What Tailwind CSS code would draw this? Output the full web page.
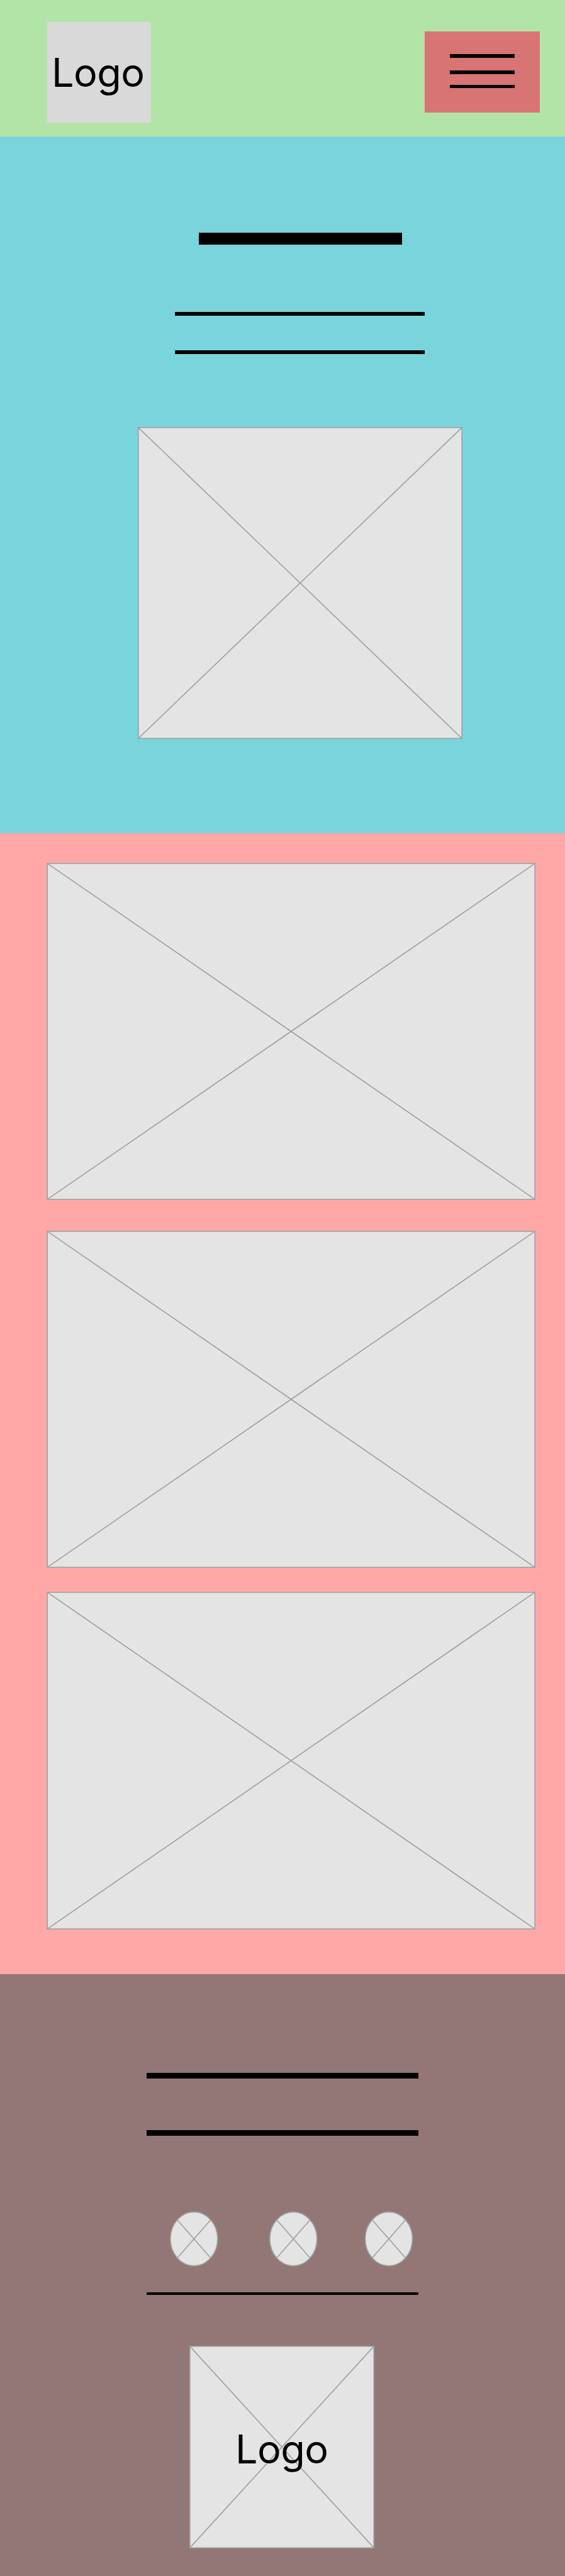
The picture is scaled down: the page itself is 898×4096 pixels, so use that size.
<!DOCTYPE html>
<html lang="en">
<head>
<meta charset="utf-8">
<title>Wireframe</title>
<script src="https://cdn.jsdelivr.net/npm/@tailwindcss/browser@4"></script>
</head>
<body class="w-[898px] bg-[#937776] font-['Inter',sans-serif] text-black">
  <header class="flex h-[217px] items-start justify-between bg-[#b2e4a7] pl-[75px] pr-10">
    <div class="mt-[35px] flex h-40 w-[165px] items-start bg-[#d9d9d9] pl-[7px] pt-[42px] text-[63px] leading-[76px] tracking-[-0.6px]">Logo</div>
    <button class="mt-[50px] flex h-[129px] w-[183px] flex-col items-start bg-[#d87474] pl-10 pt-9" aria-label="Menu">
      <span class="h-[6px] w-[103px] bg-black"></span>
      <span class="mt-5 h-[6px] w-[103px] bg-black"></span>
      <span class="mt-[17px] h-[5px] w-[103px] bg-black"></span>
    </button>
  </header>

  <section class="flex h-[1108px] flex-col items-center bg-[#79d5db] pl-14 pt-[153px]">
    <div class="ml-px h-[19px] w-[323px] bg-black"></div>
    <div class="mr-px mt-[107px] h-[6px] w-[397px] bg-black"></div>
    <div class="mr-px mt-[55px] h-[6px] w-[397px] bg-black"></div>
    <svg class="mt-[116px] block h-[496px] w-[516px]" viewBox="0 0 516 496" fill="#e4e4e4" stroke="#a1a1a1" stroke-width="1.67">
      <rect x=".83" y=".83" width="514.34" height="494.34"/>
      <path d="M.83.83 515.17 495.17M515.17.83.83 495.17"/>
    </svg>
  </section>

  <section class="h-[1814px] bg-[#ffa8a7] pl-[74px] pt-[47px]">
    <svg class="block h-[536px] w-[777px]" viewBox="0 0 777 536" fill="#e4e4e4" stroke="#a1a1a1" stroke-width="1.67">
      <rect x="1.2" y=".83" width="775" height="534.34"/>
      <path d="M1.2.83 776.2 535.17M776.2.83 1.2 535.17"/>
    </svg>
    <svg class="mt-[49px] block h-[536px] w-[777px]" viewBox="0 0 777 536" fill="#e4e4e4" stroke="#a1a1a1" stroke-width="1.67">
      <rect x="1.2" y=".83" width="775" height="534.34"/>
      <path d="M1.2.83 776.2 535.17M776.2.83 1.2 535.17"/>
    </svg>
    <svg class="mt-[38px] block h-[537px] w-[777px]" viewBox="0 0 777 537" fill="#e4e4e4" stroke="#a1a1a1" stroke-width="1.67">
      <rect x="1.2" y=".83" width="775" height="535.34"/>
      <path d="M1.2.83 776.2 536.17M776.2.83 1.2 536.17"/>
    </svg>
  </section>

  <footer class="flex h-[957px] flex-col items-center bg-[#937776] pt-[157px]">
    <div class="h-[9px] w-[432px] bg-black"></div>
    <div class="mt-[82px] h-[9px] w-[432px] bg-black"></div>
    <div class="mt-[120px] flex w-[432px] pl-[37px]">
      <svg class="block h-[88px] w-[77px]" viewBox="0 0 77 88" fill="#e4e4e4" stroke="#a1a1a1" stroke-width="1.67">
        <ellipse cx="38.3" cy="44" rx="37.5" ry="42.8"/>
        <path d="M11.8 13.7 64.8 74.3M64.8 13.7 11.8 74.3"/>
      </svg>
      <svg class="ml-[81px] block h-[88px] w-[77px]" viewBox="0 0 77 88" fill="#e4e4e4" stroke="#a1a1a1" stroke-width="1.67">
        <ellipse cx="38.3" cy="44" rx="37.5" ry="42.8"/>
        <path d="M11.8 13.7 64.8 74.3M64.8 13.7 11.8 74.3"/>
      </svg>
      <svg class="ml-[75px] block h-[88px] w-[77px]" viewBox="0 0 77 88" fill="#e4e4e4" stroke="#a1a1a1" stroke-width="1.67">
        <ellipse cx="38" cy="44" rx="37.5" ry="42.8"/>
        <path d="M11.5 13.7 64.5 74.3M64.5 13.7 11.5 74.3"/>
      </svg>
    </div>
    <div class="mt-[41px] h-[4px] w-[432px] bg-black"></div>
    <div class="mr-[2px] mt-[81px] grid h-[322px] w-[294px]">
      <svg class="col-start-1 row-start-1 block h-[322px] w-[294px]" viewBox="0 0 294 322" fill="#e4e4e4" stroke="#a1a1a1" stroke-width="1.67">
        <rect x=".83" y=".83" width="292.34" height="320.34"/>
        <path d="M.83.83 293.17 321.17M293.17.83.83 321.17"/>
      </svg>
      <div class="z-10 col-start-1 row-start-1 pl-[73px] pt-[126px] text-[63px] leading-[76px] tracking-[-0.6px]">Logo</div>
    </div>
  </footer>
</body>
</html>
